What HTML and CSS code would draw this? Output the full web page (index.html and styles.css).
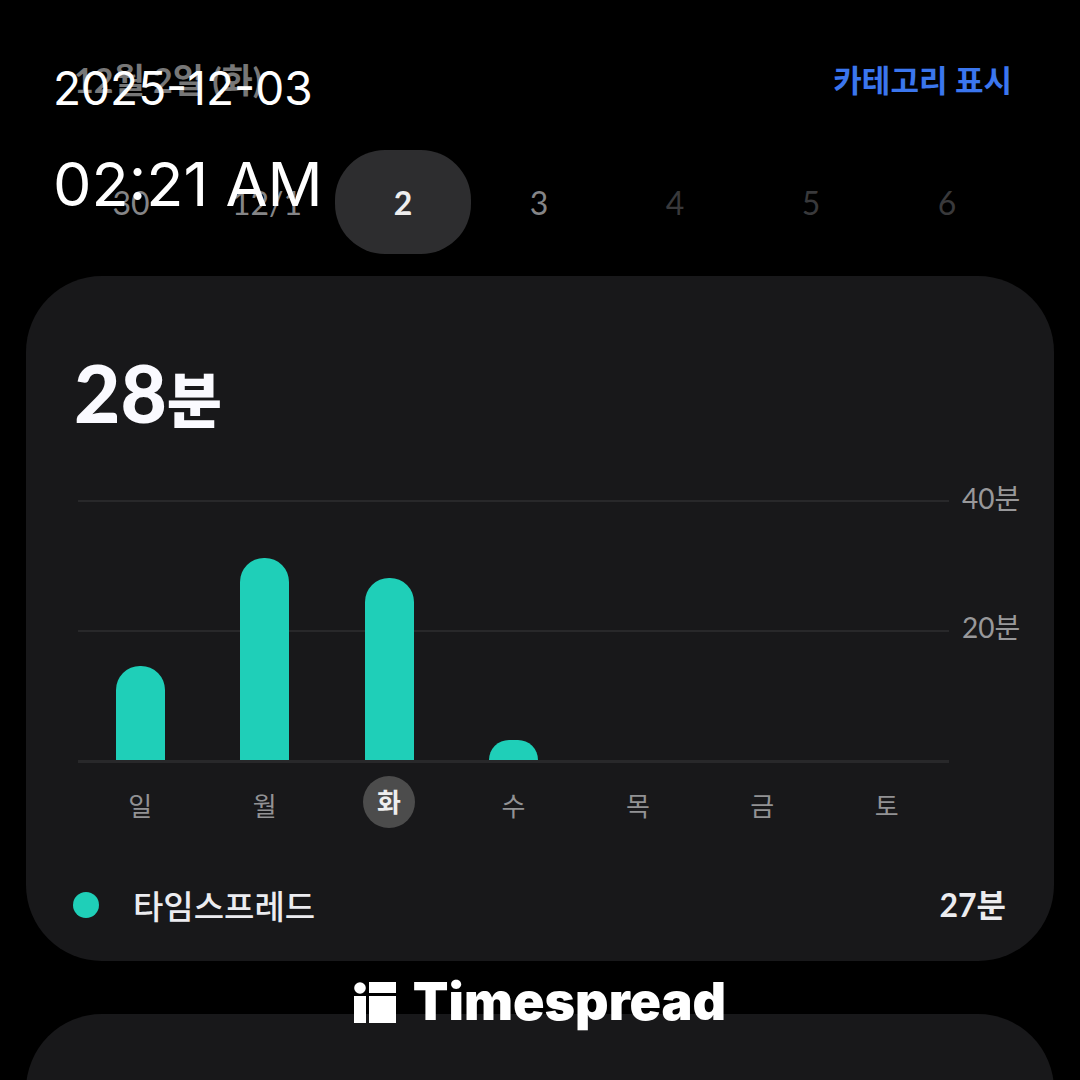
FILE: index.html
```
<!DOCTYPE html>
<html lang="ko">

<head>
    <meta charset="UTF-8">
    <meta name="viewport" content="width=device-width, initial-scale=1.0">
    <title>Timespread</title>
    <link rel="stylesheet" href="styles.css">
</head>

<body>
    <main class="screen">
        <header class="header">
            <h1 class="date-title">12월 2일 (화)</h1>
            <button type="button" class="category-button">카테고리 표시</button>
        </header>

        <nav class="days">
            <button type="button" class="day">30</button>
            <button type="button" class="day">12/1</button>
            <button type="button" class="day selected">2</button>
            <button type="button" class="day">3</button>
            <button type="button" class="day" disabled>4</button>
            <button type="button" class="day" disabled>5</button>
            <button type="button" class="day" disabled>6</button>
        </nav>

        <section class="card">
            <h2 class="total">28<span class="unit">분</span></h2>

            <div class="chart">
                <div class="plot">
                    <div class="grid-lines">
                        <div class="grid-row"></div>
                        <div class="grid-row"></div>
                    </div>
                    <div class="bars">
                        <div class="column"><div class="bar" style="height: 94px"></div></div>
                        <div class="column"><div class="bar" style="height: 202px"></div></div>
                        <div class="column"><div class="bar" style="height: 182px"></div></div>
                        <div class="column"><div class="bar" style="height: 20px"></div></div>
                        <div class="column"></div>
                        <div class="column"></div>
                        <div class="column"></div>
                    </div>
                </div>
                <div class="scale">
                    <span>40분</span>
                    <span>20분</span>
                </div>
                <div class="weekdays">
                    <span class="weekday">일</span>
                    <span class="weekday">월</span>
                    <span class="weekday current">화</span>
                    <span class="weekday">수</span>
                    <span class="weekday">목</span>
                    <span class="weekday">금</span>
                    <span class="weekday">토</span>
                </div>
            </div>

            <div class="usage">
                <span class="dot"></span>
                <span class="app-name">타임스프레드</span>
                <span class="app-time">27분</span>
            </div>
        </section>

        <section class="card next-card"></section>

        <!-- Timestamp -->
        <div class="stamp">
            <p class="stamp-date">2025-12-03</p>
            <p class="stamp-time">02:21 AM</p>
        </div>

        <!-- Logo -->
        <div class="brand">
            <svg class="brand-icon" viewBox="0 0 42 42" width="42" height="42" fill="#fff" aria-hidden="true">
                <circle cx="6" cy="7" r="5.8" />
                <rect x="15" y="1" width="27" height="11" />
                <rect x="0" y="15" width="12" height="27" />
                <rect x="15" y="15" width="27" height="27" />
            </svg>
            <span class="brand-name">Timespread</span>
        </div>
    </main>
</body>

</html>
```
FILE: styles.css
```
/* General Styles */
* {
    box-sizing: border-box;
}

body {
    margin: 0;
    background: #000;
    color: #fff;
    font-family: Lato, "Noto Sans CJK KR", sans-serif;
}

h1,
h2,
p {
    margin: 0;
}

button {
    border: none;
    padding: 0;
    background: none;
    color: inherit;
    font: inherit;
    cursor: pointer;
}

.screen {
    position: relative;
    height: 100vh;
    overflow: hidden;
    padding: 56px 26px 0;
}

/* Header */
.header {
    display: flex;
    justify-content: space-between;
    align-items: center;
    height: 48px;
    padding: 0 42px 0 48px;
}

.date-title {
    font-size: 34px;
    line-height: 48px;
    font-weight: 700;
    color: #777;
}

.category-button {
    font-size: 31px;
    line-height: 48px;
    font-weight: 700;
    color: #3b76ee;
}

/* Day Picker */
.days {
    display: flex;
    margin-top: 46px;
    padding: 0 39px 0 37px;
}

.day {
    flex: 1;
    height: 104px;
    border-radius: 50px;
    font-size: 32px;
    color: #858587;
}

.day:disabled {
    color: #39393b;
    cursor: default;
}

.day.selected {
    background: #2d2d2f;
    color: #eee;
    font-weight: 700;
}

/* Usage Card */
.card {
    margin-top: 22px;
    padding: 68px 34px 24px 48px;
    border-radius: 76px;
    background: #18181a;
}

.total {
    height: 96px;
    font-size: 80px;
    line-height: 96px;
    font-weight: 900;
    color: #fafaff;
}

.unit {
    font-size: 60px;
}

/* Chart */
.chart {
    display: grid;
    grid-template-columns: 1fr 58px;
    column-gap: 13px;
    margin-top: 60px;
    padding-left: 4px;
}

.plot {
    display: grid;
}

.grid-lines,
.bars {
    grid-area: 1 / 1;
}

.grid-lines {
    border-bottom: 3px solid #28282a;
}

.grid-row {
    height: 130px;
    border-top: 2px solid #28282a;
}

.bars {
    display: flex;
    height: 260px;
}

.column {
    display: flex;
    flex: 1;
    justify-content: center;
    align-items: flex-end;
}

.bar {
    width: 49px;
    border-radius: 24px 24px 0 0;
    background: #1fcfb8;
}

.scale {
    display: flex;
    flex-direction: column;
    gap: 89px;
    margin-top: -22px;
    font-size: 28px;
    line-height: 40px;
    white-space: nowrap;
    color: #98989a;
}

.weekdays {
    display: flex;
    justify-content: space-around;
    align-items: flex-start;
    margin-top: 13px;
}

.weekday {
    width: 52px;
    border-radius: 50%;
    font-size: 26px;
    line-height: 60px;
    text-align: center;
    color: #929294;
}

.weekday.current {
    background: #4c4c4c;
    color: #eee;
    line-height: 52px;
    font-weight: 700;
}

/* App Row */
.usage {
    display: flex;
    align-items: center;
    height: 64px;
    margin-top: 37px;
    padding-right: 14px;
    font-size: 32px;
    line-height: 48px;
    color: #ececf0;
}

.dot {
    width: 26px;
    height: 26px;
    margin-left: -1px;
    border-radius: 50%;
    background: #1fcfb8;
}

.app-name {
    margin-left: 34px;
    font-family: "Noto Sans CJK KR", sans-serif;
    font-size: 33px;
    font-weight: 500;
}

.app-time {
    margin-left: auto;
    font-weight: 700;
}

.next-card {
    height: 400px;
    margin-top: 53px;
}

/* Timestamp */
.stamp {
    position: absolute;
    top: 56px;
    left: 53px;
    font-family: Inter, sans-serif;
}

.stamp-date {
    font-size: 46px;
    line-height: 64px;
}

.stamp-time {
    margin-top: 24px;
    font-size: 61px;
    line-height: 80px;
}

/* Brand */
.brand {
    position: absolute;
    left: 0;
    right: 0;
    bottom: 52px;
    display: flex;
    justify-content: center;
    align-items: center;
    gap: 17px;
}

.brand-name {
    font-family: Inter, sans-serif;
    font-size: 52px;
    line-height: 52px;
    font-weight: 900;
}
```
